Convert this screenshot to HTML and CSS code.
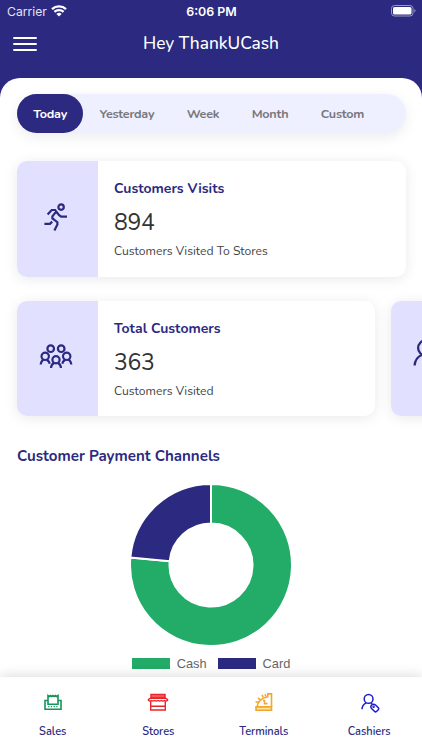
FILE: index.html
```html
<!DOCTYPE html>
<html lang="en">
<head>
  <meta charset="UTF-8">
  <title>ThankUCash</title>
  <meta name="viewport" content="width=device-width, initial-scale=1.0">
  <link rel="stylesheet" href="styles.css">
</head>
<body>

  <header>
    <div class="status-bar">
      <div class="carrier">
        <span>Carrier</span>
        <svg width="16" height="12" viewBox="0 0 16 12" fill="none" stroke="#fff" stroke-width="2.3">
          <path d="M1 4.1a10.2 10.2 0 0 1 14 0M3.4 6.9a6.8 6.8 0 0 1 9.2 0"/>
          <path d="M8 11.6 5.4 9a3.8 3.8 0 0 1 5.2 0z" fill="#fff" stroke="none"/>
        </svg>
      </div>
      <span class="time">6:06 PM</span>
      <div class="battery">
        <svg width="25" height="12" viewBox="0 0 25 12">
          <rect x=".5" y=".5" width="21.5" height="10.5" rx="3" fill="none" stroke="#9a98c4"/>
          <rect x="2" y="2" width="18.5" height="7.5" rx="1.6" fill="#fff"/>
          <path d="M23.3 4v3.6q1.2-.5 1.2-1.8T23.3 4z" fill="#9a98c4"/>
        </svg>
      </div>
    </div>
    <div class="title-bar">
      <svg width="24" height="16" viewBox="0 0 24 16" stroke="#fff" stroke-width="1.9" stroke-linecap="round">
        <path d="M1 2h22M1 8h22M1 14h22"/>
      </svg>
      <h1>Hey ThankUCash</h1>
    </div>
  </header>

  <main>
    <div class="tabs">
      <button class="tab active">Today</button>
      <button class="tab">Yesterday</button>
      <button class="tab">Week</button>
      <button class="tab">Month</button>
      <button class="tab">Custom</button>
    </div>

    <section class="card visits">
      <div class="card-icon">
        <svg width="24" height="28" viewBox="0 0 24 28" fill="none" stroke="#2b2a80" stroke-width="2.2">
          <circle cx="17.1" cy="4.1" r="2.7"/>
          <path d="M3.6 11.4 7.7 7h3.4l4 5.2 2 1.5H23M11.9 8.9 8.4 13.4v2l5 3.8v2.4l-3 5.8M.4 20.8h5.6l2.2-2.2"/>
        </svg>
      </div>
      <div class="card-body">
        <h3>Customers Visits</h3>
        <p class="number">894</p>
        <p class="caption">Customers Visited To Stores</p>
      </div>
    </section>

    <div class="slider">
      <section class="card total">
        <div class="card-icon">
          <svg width="34" height="25" viewBox="0 0 34 25" fill="none" stroke="#2b2a80" stroke-width="2.2">
            <circle cx="11.7" cy="4.7" r="3.3"/>
            <circle cx="22.2" cy="4.7" r="3.3"/>
            <circle cx="6.2" cy="12.3" r="3.7"/>
            <circle cx="27.7" cy="12.3" r="3.7"/>
            <circle cx="17" cy="15.8" r="3.6"/>
            <path d="M1.7 20.5q.2-3.3 2.8-4.9M7.8 15.7q2.5 1.6 2.9 4M32.3 20.5q-.2-3.3-2.8-4.9M26.2 15.7q-2.5 1.6-2.9 4M12 24q.2-3.3 2.9-5M22 24q-.2-3.3-2.9-5"/>
          </svg>
        </div>
        <div class="card-body">
          <h3>Total Customers</h3>
          <p class="number">363</p>
          <p class="caption">Customers Visited</p>
        </div>
      </section>
      <section class="card next">
        <div class="card-icon">
          <svg width="34" height="34" viewBox="0 0 34 34" fill="none" stroke="#2b2a80" stroke-width="2.3">
            <circle cx="12.6" cy="11" r="7.5"/>
            <path d="M1.6 28.5q.6-8 7.5-10.8"/>
          </svg>
        </div>
      </section>
    </div>

    <h2>Customer Payment Channels</h2>

    <div class="chart">
      <svg width="162" height="162" viewBox="-81 -81 162 162" stroke="#fff" stroke-width="2">
        <path fill="#23ab68" d="M0-81A81 81 0 1 1-80.66-7.5L-41.3-3.8A41.5 41.5 0 1 0 0-41.5z"/>
        <path fill="#2b2a80" d="M0-81A81 81 0 0 0-80.66-7.5L-41.3-3.8A41.5 41.5 0 0 1 0-41.5z"/>
      </svg>
      <div class="legend">
        <i class="swatch cash"></i><span>Cash</span>
        <i class="swatch card-pay"></i><span>Card</span>
      </div>
    </div>
  </main>

  <nav>
    <a href="#">
      <svg width="20" height="20" viewBox="0 0 20 20" fill="none" stroke="#16945a" stroke-width="1.6">
        <path d="M5 8H2v8.8h16V8h-3"/>
        <path d="M5 11.8V3l1.3.9L7.5 3l1.2.9L10 3l1.3.9 1.2-.9 1.2.9L15 3v8.8z"/>
        <path d="M5.2 14.2h9.6" stroke-width="1.2" stroke-dasharray="1.2 1.5"/>
      </svg>
      <span>Sales</span>
    </a>
    <a href="#">
      <svg width="22" height="20" viewBox="0 0 22 20" fill="none" stroke="#e8262b" stroke-width="1.4">
        <path d="M4 1.9h14v4H4z" fill="#f4585b"/>
        <path d="M4 5.4 1.5 7v1q1.6 1 3 0 1.6 1 3.2 0 1.6 1 3.3 0 1.7 1 3.3 0 1.6 1 3.2 0 1.4 1 3 0V7L18 5.4z"/>
        <path d="M3.7 8.5v9h14.6v-9M3.7 13.8h14.6"/>
      </svg>
      <span>Stores</span>
    </a>
    <a href="#">
      <svg width="20" height="21" viewBox="0 0 20 21" fill="none" stroke="#f2a72b" stroke-width="1.6">
        <path d="M2 14.9h15.5v3.4H2z" fill="#fbe0ac"/>
        <path d="M3.2 14.8Q4 7 13.7 4.8V1.9h3.8v13"/>
        <path d="M1.5 10h3.3M4 5.8l2.2 2M8 2.9l1.2 2.4M11 2.3l.8 2.3"/>
        <path d="M10.5 7.8v3.8h3M9 8.6h1.5"/>
      </svg>
      <span>Terminals</span>
    </a>
    <a href="#">
      <svg width="21" height="21" viewBox="-1 -.5 21 21" fill="none" stroke="#1e1cc8" stroke-width="1.5">
        <circle cx="8.6" cy="6.4" r="4.4"/>
        <path d="M2 16.8q.2-4.5 4.2-6.4M11 10.3l1.3.9"/>
        <path d="M11.3 12.8q1.8-1.7 4-.5l3 3q.8 1 0 1.9l-1.8 1.8q-1 .8-1.9 0l-3-3q-1.3-1.7-.3-3.2z"/>
        <circle cx="13.6" cy="14.2" r=".5"/>
      </svg>
      <span>Cashiers</span>
    </a>
  </nav>

</body>
</html>
```

FILE: styles.css
```css
* {
  box-sizing: border-box;
}
html, body {
  height: 100%;
  margin: 0;
  overflow: hidden;
}
body {
  display: flex;
  flex-direction: column;
  font-family: 'Nunito', 'Noto Sans', sans-serif;
  background-color: #2b2a80;
  color: #333;
}
h1, h2, h3, p {
  margin: 0;
  white-space: nowrap;
}
svg {
  display: block;
  flex-shrink: 0;
}
header {
  height: 78px;
  flex-shrink: 0;
  color: #fff;
}
.status-bar {
  display: grid;
  grid-template-columns: 1fr auto 1fr;
  align-items: center;
  height: 22px;
  padding: 0 6px 0 7px;
  font-family: 'Inter', sans-serif;
  font-size: 12.2px;
}
.carrier {
  display: flex;
  align-items: center;
  gap: 4px;
  color: #e4e3f2;
}
.time {
  font-size: 12.4px;
  font-weight: 600;
}
.battery {
  display: flex;
  justify-content: flex-end;
}
.title-bar {
  display: grid;
  grid-template-columns: 40px 1fr 40px;
  align-items: center;
  height: 43px;
  padding: 0 13px;
}
h1 {
  font-size: 17.3px;
  font-weight: 500;
  text-align: center;
}
main {
  flex: 1;
  min-height: 0;
  padding: 16px 16px 0 17px;
  background-color: #fff;
  border-radius: 20px 20px 0 0;
  overflow: hidden;
}
.tabs {
  display: flex;
  height: 39px;
  border-radius: 20px;
  background-color: #eff0ff;
  box-shadow: 0 4px 14px rgba(0, 0, 0, 0.08);
}
.tab {
  padding: 0 16.2px;
  border: none;
  border-radius: 20px;
  background: none;
  color: #77777d;
  font-family: inherit;
  font-size: 12.6px;
  font-weight: 700;
  letter-spacing: -0.25px;
  white-space: nowrap;
}
.tab.active {
  background-color: #2b2a80;
  color: #fff;
}
.card {
  display: flex;
  flex-shrink: 0;
  height: 115px;
  border-radius: 10px;
  background-color: #fff;
  box-shadow: 0 2px 14px rgba(0, 0, 0, 0.09);
  overflow: hidden;
}
.visits {
  height: 116px;
  margin-top: 28px;
}
.card-icon {
  display: flex;
  align-items: center;
  justify-content: center;
  width: 81px;
  padding-right: 4px;
  padding-bottom: 4px;
  background-color: #e1e1ff;
}
.card-body {
  padding: 18px 0 0 16px;
}
h3 {
  color: #2b2a80;
  font-size: 14px;
  font-weight: 700;
  line-height: 20px;
}
.number {
  margin-top: 6px;
  font-size: 23px;
  letter-spacing: -0.3px;
  line-height: 35px;
}
.caption {
  margin-top: 3px;
  color: #444;
  font-size: 12.15px;
  line-height: 16px;
}
.slider {
  display: flex;
  gap: 16px;
  margin-top: 24px;
}
.total {
  width: 358px;
}
.next {
  width: 358px;
}
.next .card-icon {
  padding-bottom: 10px;
}
h2 {
  margin-top: 29px;
  color: #2b2a80;
  font-size: 15.1px;
  font-weight: 700;
  line-height: 22px;
}
.chart {
  display: flex;
  flex-direction: column;
  align-items: center;
  margin-top: 17px;
  padding-right: 1px;
}
.legend {
  display: flex;
  align-items: center;
  margin-top: 9px;
  color: #666;
  font-family: 'Liberation Sans', sans-serif;
  font-size: 12.8px;
  line-height: 17px;
}
.swatch {
  width: 38px;
  height: 11px;
  margin-right: 7px;
}
.legend span + .swatch {
  margin-left: 11px;
}
.cash {
  background-color: #23ab68;
}
.card-pay {
  background-color: #2b2a80;
}
nav {
  position: relative;
  display: flex;
  flex-shrink: 0;
  height: 73px;
  background-color: #fff;
  box-shadow: 0 -1px 12px rgba(0, 0, 0, 0.15);
}
nav a {
  display: flex;
  flex: 1;
  flex-direction: column;
  align-items: center;
  padding-top: 15px;
  color: #2b2a80;
  font-size: 11px;
  font-weight: 600;
  line-height: 16px;
  text-decoration: none;
}
nav svg {
  height: 21px;
}
nav span {
  margin-top: 11px;
}
```
